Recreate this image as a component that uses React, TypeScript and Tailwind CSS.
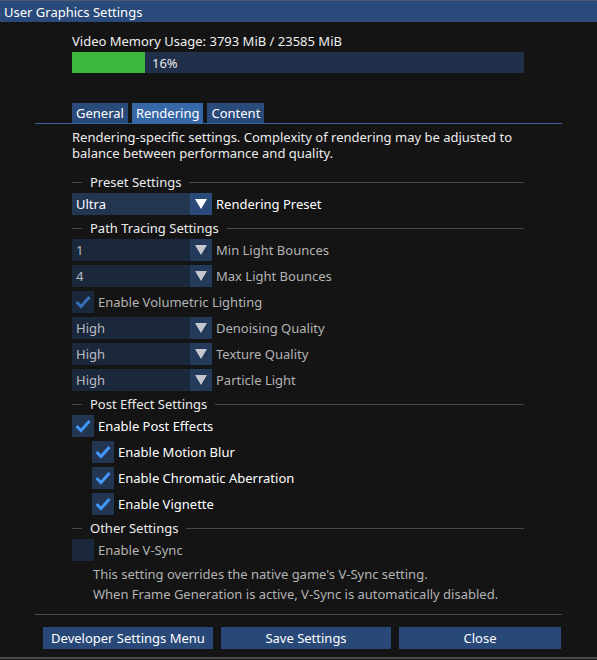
import React from "react";

const font = { fontFamily: '"Noto Sans", "Open Sans", sans-serif' };

function Arrow({ dim }: { dim?: boolean }) {
  return (
    <svg width="12" height="10" viewBox="0 0 12 10">
      <polygon points="0,0 12,0 6,10" fill={dim ? "#c4c8ce" : "#ffffff"} />
    </svg>
  );
}

function Check({ color }: { color: string }) {
  return (
    <svg width="22" height="22" viewBox="0 0 22 22">
      <polyline points="4.5,11 9,15.5 17.5,6" fill="none" stroke={color} strokeWidth="3" />
    </svg>
  );
}

function Separator({ label }: { label: string }) {
  return (
    <div className="flex items-center h-[18px] mt-[4px] mb-[2px]">
      <div className="w-[10px] h-px bg-[#484848]" />
      <span className="ml-[8px] mr-[8px] text-[#ececec]">{label}</span>
      <div className="flex-1 h-px bg-[#484848]" />
    </div>
  );
}

function Combo({ value, label, dim }: { value: string; label: string; dim?: boolean }) {
  return (
    <div className="flex items-center">
      <div className={`w-[140px] h-[22px] flex ${dim ? "bg-[#1b283b]" : "bg-[#223652]"}`}>
        <span className={`flex-1 pl-[4px] leading-[22px] ${dim ? "text-[#b9bcc1]" : "text-white"}`}>{value}</span>
        <div className={`w-[22px] h-[22px] flex items-center justify-center ${dim ? "bg-[#233a5a]" : "bg-[#2a4a7a]"}`}>
          <Arrow dim={dim} />
        </div>
      </div>
      <span className={`ml-[4px] ${dim ? "text-[#b3b3b3]" : "text-white"}`}>{label}</span>
    </div>
  );
}

function CheckRow({
  label,
  checked,
  dim,
  indent,
}: {
  label: string;
  checked?: boolean;
  dim?: boolean;
  indent?: boolean;
}) {
  return (
    <div className={`flex items-center ${indent ? "pl-[20px]" : ""}`}>
      <div className={`w-[22px] h-[22px] ${dim ? "bg-[#1b283b]" : "bg-[#223652]"}`}>
        {checked && <Check color={dim ? "#3470b6" : "#4296fa"} />}
      </div>
      <span className={`ml-[4px] ${dim ? "text-[#b3b3b3]" : "text-white"}`}>{label}</span>
    </div>
  );
}

export default function App() {
  return (
    <div className="w-[597px] h-[660px] bg-[#141414] text-[13px] leading-[16px] text-[#f0f0f0] flex flex-col" style={font}>
      {/* Title bar */}
      <div className="h-[22px] border-t border-[#4f5968] bg-[#294a7a] pl-[4px] flex items-center text-white">
        User Graphics Settings
      </div>

      <div className="px-[35px] flex-1 flex flex-col">
        {/* Memory */}
        <div className="pl-[37px] pr-[38px] mt-[11px]">
          <div>Video Memory Usage: 3793 MiB / 23585 MiB</div>
          <div className="mt-[3px] h-[21px] bg-[#21304a] flex items-center">
            <div className="w-[73px] h-full bg-[#3db63c]" />
            <span className="ml-[7px] text-[#e8e8e8]">16%</span>
          </div>
        </div>

        {/* Tabs */}
        <div className="mt-[30px] border-b border-[#3a64a0] pl-[37px] flex items-end gap-[4px] h-[21px]">
          <div className="px-[4px] h-[20px] leading-[20px] bg-[#2a4a7a] text-white">General</div>
          <div className="px-[4px] h-[20px] leading-[20px] bg-[#3667a6] text-white">Rendering</div>
          <div className="px-[4px] h-[20px] leading-[20px] bg-[#2a4a7a] text-white">Content</div>
        </div>

        <div className="pl-[37px] pr-[38px] mt-[5px] flex flex-col">
          <div className="text-[#ececec]">
            <div>Rendering-specific settings. Complexity of rendering may be adjusted to</div>
            <div>balance between performance and quality.</div>
          </div>

          <div className="mt-[8px]" />
          <Separator label="Preset Settings" />
          <Combo value="Ultra" label="Rendering Preset" />

          <Separator label="Path Tracing Settings" />
          <div className="flex flex-col gap-1">
            <Combo value="1" label="Min Light Bounces" dim />
            <Combo value="4" label="Max Light Bounces" dim />
            <CheckRow label="Enable Volumetric Lighting" checked dim />
            <Combo value="High" label="Denoising Quality" dim />
            <Combo value="High" label="Texture Quality" dim />
            <Combo value="High" label="Particle Light" dim />
          </div>

          <Separator label="Post Effect Settings" />
          <div className="flex flex-col gap-1">
            <CheckRow label="Enable Post Effects" checked />
            <CheckRow label="Enable Motion Blur" checked indent />
            <CheckRow label="Enable Chromatic Aberration" checked indent />
            <CheckRow label="Enable Vignette" checked indent />
          </div>

          <Separator label="Other Settings" />
          <CheckRow label="Enable V-Sync" dim />
          <div className="pl-[21px] mt-[3px] text-[#b3b3b3] leading-[20px]">
            <div>This setting overrides the native game's V-Sync setting.</div>
            <div>When Frame Generation is active, V-Sync is automatically disabled.</div>
          </div>
        </div>

        <div className="mt-[10px] h-px bg-[#484848]" />

        {/* Buttons */}
        <div className="mt-[12px] flex gap-[8px] pl-[8px]">
          <button className="w-[170px] h-[22px] bg-[#284878] text-white">Developer Settings Menu</button>
          <button className="w-[170px] h-[22px] bg-[#284878] text-white">Save Settings</button>
          <button className="w-[162px] h-[22px] bg-[#284878] text-white">Close</button>
        </div>
      </div>

      <div className="h-[2px] bg-[#4a4a4e] mb-[1px]" />
    </div>
  );
}
